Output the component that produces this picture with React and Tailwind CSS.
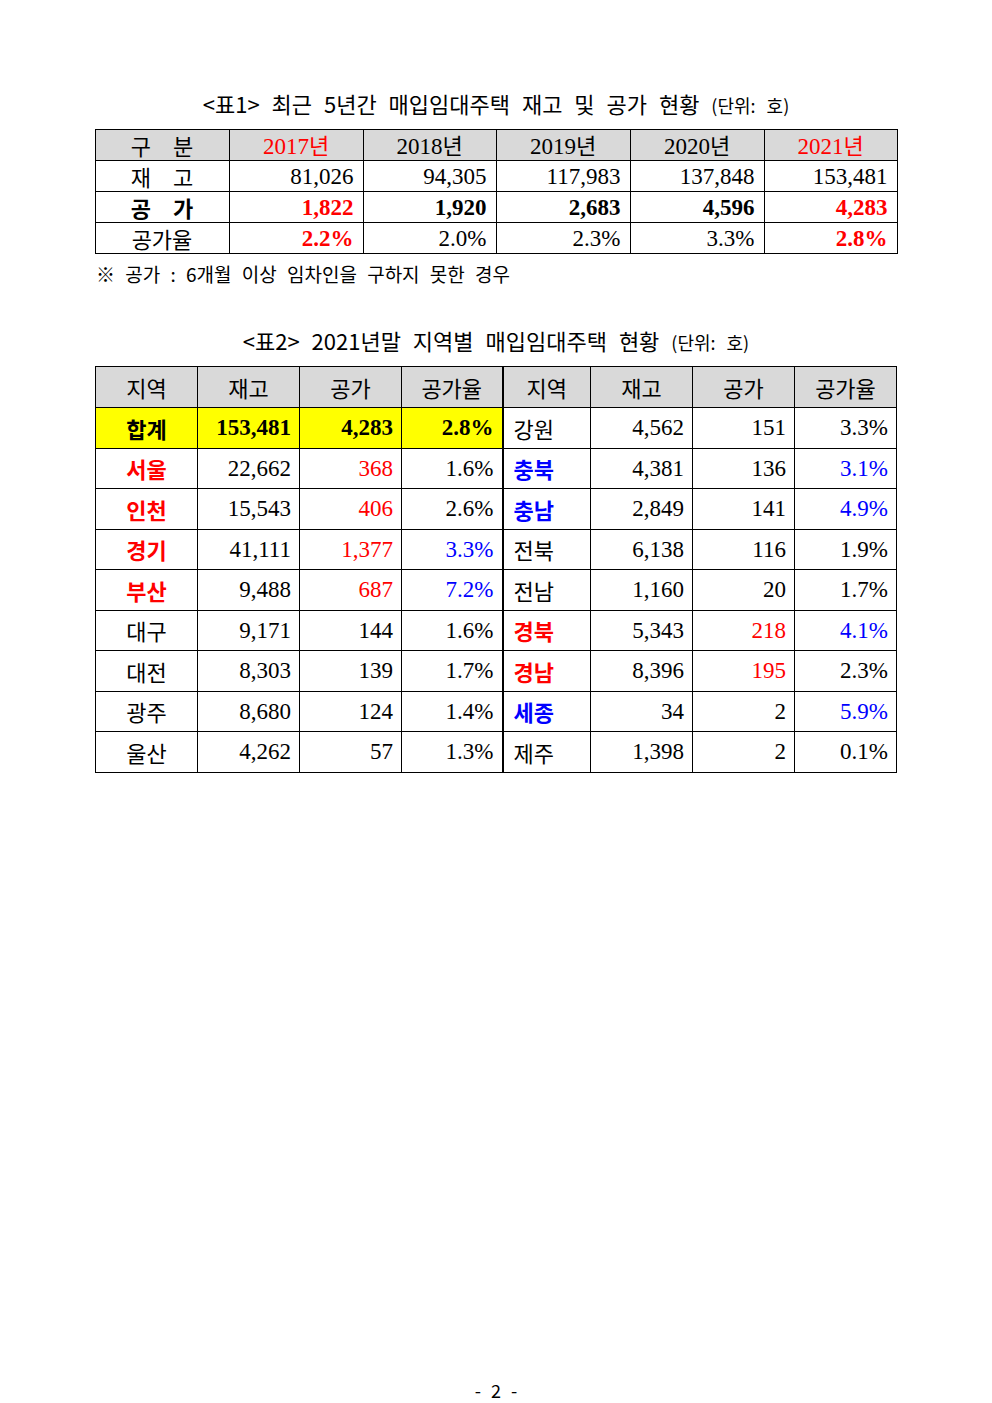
const RED = "text-[#ff0000]";
const BLUE = "text-[#0000ff]";

const table1 = [
    { label: ["재", "고"], bold: false, cells: [["81,026"], ["94,305"], ["117,983"], ["137,848"], ["153,481"]] },
    { label: ["공", "가"], bold: true, cells: [["1,822", "red"], ["1,920"], ["2,683"], ["4,596"], ["4,283", "red"]] },
    { label: ["공가율"], bold: false, cells: [["2.2%", "red", true], ["2.0%"], ["2.3%"], ["3.3%"], ["2.8%", "red", true]] },
];

// [name, nameColor, stock, vacant, vacantColor, rate, rateColor]
const left = [
    ["서울", "red", "22,662", "368", "red", "1.6%", ""],
    ["인천", "red", "15,543", "406", "red", "2.6%", ""],
    ["경기", "red", "41,111", "1,377", "red", "3.3%", "blue"],
    ["부산", "red", "9,488", "687", "red", "7.2%", "blue"],
    ["대구", "", "9,171", "144", "", "1.6%", ""],
    ["대전", "", "8,303", "139", "", "1.7%", ""],
    ["광주", "", "8,680", "124", "", "1.4%", ""],
    ["울산", "", "4,262", "57", "", "1.3%", ""],
];

const right = [
    ["강원", "", "4,562", "151", "", "3.3%", ""],
    ["충북", "blue", "4,381", "136", "", "3.1%", "blue"],
    ["충남", "blue", "2,849", "141", "", "4.9%", "blue"],
    ["전북", "", "6,138", "116", "", "1.9%", ""],
    ["전남", "", "1,160", "20", "", "1.7%", ""],
    ["경북", "red", "5,343", "218", "red", "4.1%", "blue"],
    ["경남", "red", "8,396", "195", "red", "2.3%", ""],
    ["세종", "blue", "34", "2", "", "5.9%", "blue"],
    ["제주", "", "1,398", "2", "", "0.1%", ""],
];

function tone(c) {
    if (c === "red") return RED;
    if (c === "blue") return BLUE;
    return "text-black";
}

const kr = "font-['Noto_Sans_CJK_KR',sans-serif]";
const num = "font-['Liberation_Serif','Noto_Sans_CJK_KR',serif]";

function Label({ parts, bold }) {
    return (
        <div className={`flex justify-center gap-[22px] ${kr} text-[22px] leading-none ${bold ? "font-bold" : ""}`}>
            {parts.map((p) => (
                <span key={p}>{p}</span>
            ))}
        </div>
    );
}

function RegionRow({ l, r, total }) {
    const cell = "border border-black px-[8px] py-0 leading-none";
    const name = `${cell} ${kr} text-[22px]`;
    const n = `${cell} text-right ${num} text-[23px]`;
    return (
        <tr className="h-[40.5px]">
            {l ? (
                <>
                    <td className={`${name} text-center ${l[1] ? "font-bold" : ""} ${tone(l[1])}`}>{l[0]}</td>
                    <td className={`${n} text-black`}>{l[2]}</td>
                    <td className={`${n} ${tone(l[4])}`}>{l[3]}</td>
                    <td className={`${n} border-r-2 ${tone(l[6])}`}>{l[5]}</td>
                </>
            ) : (
                <>
                    <td className={`${name} bg-[#ffff00] text-center font-bold`}>{total[0]}</td>
                    <td className={`${n} bg-[#ffff00] font-bold`}>{total[1]}</td>
                    <td className={`${n} bg-[#ffff00] font-bold`}>{total[2]}</td>
                    <td className={`${n} border-r-2 bg-[#ffff00] font-bold`}>{total[3]}</td>
                </>
            )}
            <td className={`${name} pl-[10px] text-left ${r[1] ? "font-bold" : ""} ${tone(r[1])}`}>{r[0]}</td>
            <td className={`${n} text-black`}>{r[2]}</td>
            <td className={`${n} ${tone(r[4])}`}>{r[3]}</td>
            <td className={`${n} ${tone(r[6])}`}>{r[5]}</td>
        </tr>
    );
}

export default function App() {
    const head = "border border-black bg-[#d9d9d9] font-normal p-0 leading-none";
    return (
        <div className="w-[992px] h-[1403px] bg-white text-black flex flex-col items-center pt-[88px]">
            <h1 className={`${kr} text-[22px] leading-[30px] font-normal [word-spacing:7px]`}>
                &lt;표1&gt; 최근 5년간 매입임대주택 재고 및 공가 현황 <span className="text-[18px]">(단위: 호)</span>
            </h1>

            <table className="mt-[9px] w-[802px] table-fixed border-collapse">
                <colgroup>
                    <col className="w-[134px]" />
                    <col className="w-[134px]" />
                    <col className="w-[133px]" />
                    <col className="w-[134px]" />
                    <col className="w-[134px]" />
                    <col className="w-[133px]" />
                </colgroup>
                <thead>
                    <tr className="h-[31px]">
                        <th className={head}>
                            <Label parts={["구", "분"]} />
                        </th>
                        {["2017", "2018", "2019", "2020", "2021"].map((y) => (
                            <th
                                key={y}
                                className={`${head} ${kr} text-[22px] ${y === "2017" || y === "2021" ? RED : ""}`}
                            >
                                <span className={`${num} text-[23px]`}>{y}</span>년
                            </th>
                        ))}
                    </tr>
                </thead>
                <tbody>
                    {table1.map((row) => (
                        <tr key={row.label.join("")} className="h-[31px]">
                            <td className="border border-black p-0">
                                <Label parts={row.label} bold={row.bold} />
                            </td>
                            {row.cells.map(([v, c, b], i) => (
                                <td
                                    key={i}
                                    className={`border border-black py-0 pr-[9px] text-right ${num} text-[23px] leading-none ${tone(c)} ${row.bold || b ? "font-bold" : ""}`}
                                >
                                    {v}
                                </td>
                            ))}
                        </tr>
                    ))}
                </tbody>
            </table>

            <p className={`self-start ml-[96px] mt-[7px] ${kr} text-[19px] leading-[26px] [word-spacing:6px]`}>
                ※ 공가 : 6개월 이상 임차인을 구하지 못한 경우
            </p>

            <h2 className={`mt-[38px] ${kr} text-[22px] leading-[30px] font-normal [word-spacing:7px]`}>
                &lt;표2&gt; 2021년말 지역별 매입임대주택 현황 <span className="text-[18px]">(단위: 호)</span>
            </h2>

            <table className="mt-[9px] w-[801px] table-fixed border-collapse">
                <colgroup>
                    <col className="w-[102px]" />
                    <col className="w-[102px]" />
                    <col className="w-[102px]" />
                    <col className="w-[101px]" />
                    <col className="w-[88px]" />
                    <col className="w-[102px]" />
                    <col className="w-[102px]" />
                    <col className="w-[102px]" />
                </colgroup>
                <thead>
                    <tr className="h-[41px]">
                        {["지역", "재고", "공가", "공가율"].map((h) => (
                            <th key={"l" + h} className={`${head} ${kr} text-[22px] ${h === "공가율" ? "border-r-2" : ""}`}>
                                {h}
                            </th>
                        ))}
                        {["지역", "재고", "공가", "공가율"].map((h) => (
                            <th key={"r" + h} className={`${head} ${kr} text-[22px]`}>
                                {h}
                            </th>
                        ))}
                    </tr>
                </thead>
                <tbody>
                    {right.map((r, i) => (
                        <RegionRow
                            key={r[0]}
                            l={i === 0 ? null : left[i - 1]}
                            r={r}
                            total={["합계", "153,481", "4,283", "2.8%"]}
                        />
                    ))}
                </tbody>
            </table>

            <div className="flex-1" />
            <p className={`mb-[0px] ${kr} text-[18px] leading-[26px] [word-spacing:6px]`}>- 2 -</p>
        </div>
    );
}
